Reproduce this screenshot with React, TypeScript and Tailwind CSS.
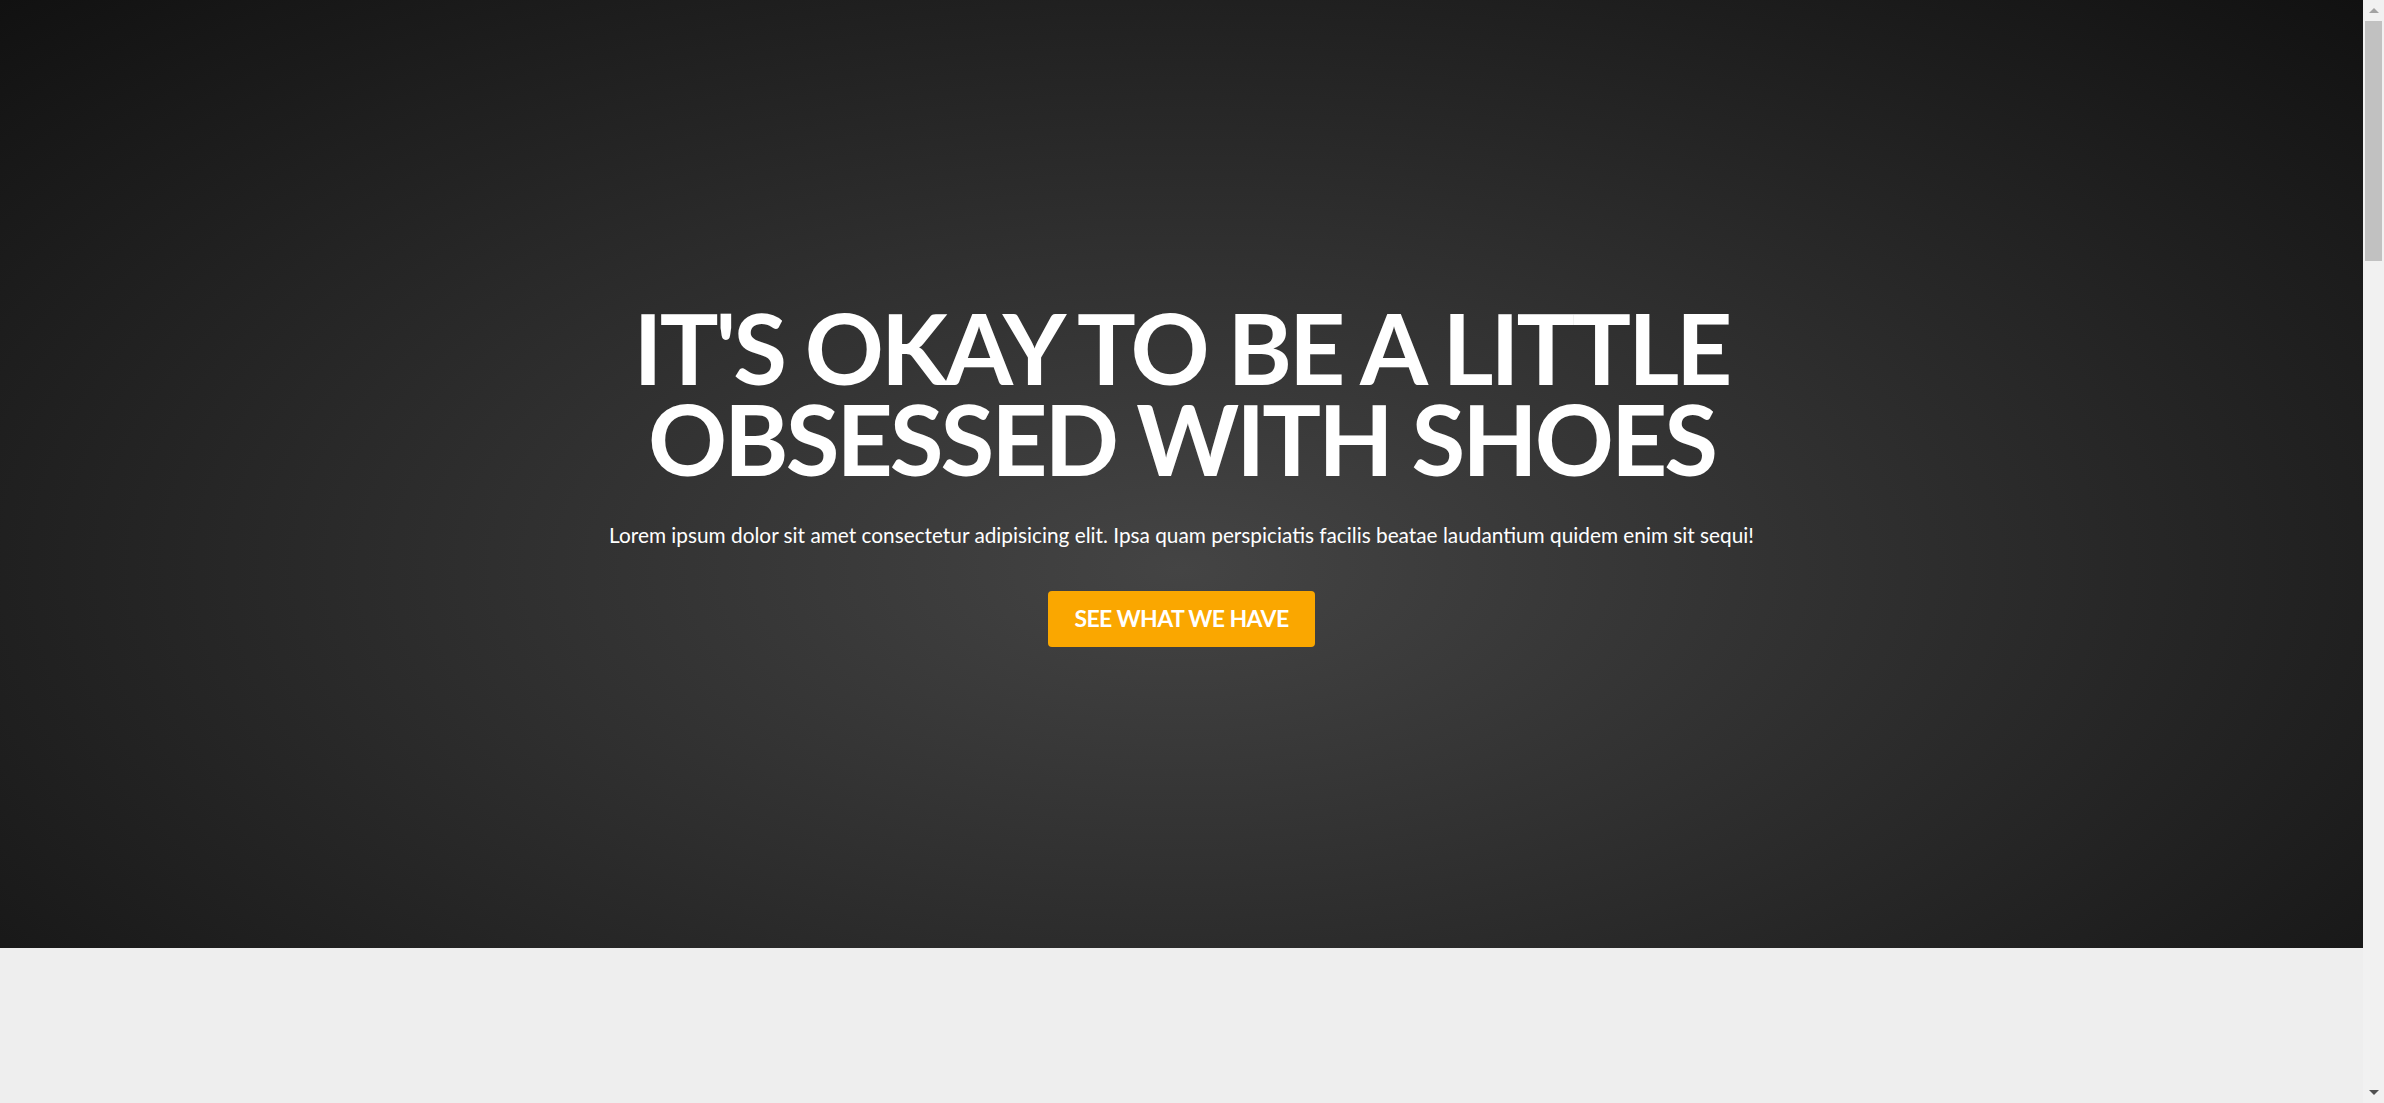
const products = [
  { name: "Air Runner", price: "$129" },
  { name: "Street Classic", price: "$89" },
  { name: "Trail Blazer", price: "$149" },
  { name: "City Loafer", price: "$119" },
  { name: "Court Low", price: "$99" },
  { name: "Summer Slide", price: "$49" },
  { name: "Canvas High", price: "$79" },
  { name: "Suede Boot", price: "$169" },
];

// window scrollbar, drawn so the frame matches the browser shot
const Scrollbar = () => (
  <div className="fixed top-0 right-0 h-screen w-[21px] bg-[#f1f1f1] flex flex-col items-center">
    <div className="h-[21px] w-full flex items-center justify-center">
      <div className="w-0 h-0 border-l-[5px] border-r-[5px] border-b-[5px] border-l-transparent border-r-transparent border-b-[#a3a3a3]" />
    </div>
    <div className="w-[17px] h-[240px] bg-[#c1c1c1]" />
    <div className="flex-1" />
    <div className="h-[21px] w-full flex items-center justify-center">
      <div className="w-0 h-0 border-l-[5px] border-r-[5px] border-t-[5px] border-l-transparent border-r-transparent border-t-[#505050]" />
    </div>
  </div>
);

const App = () => {
  return (
    <div className="mr-[21px] font-['Lato','Noto_Sans',sans-serif]">
      <section className="h-[948px] flex flex-col items-center justify-center text-center bg-[radial-gradient(ellipse_at_50%_60%,#444444_0%,#111111_100%)]">
        <h1 className="text-white font-bold uppercase text-[98px] leading-[91px] tracking-[-3px] max-w-[1200px]">
          It's okay to be a little obsessed with shoes
        </h1>
        <p className="mt-[37px] text-white text-[20.8px] leading-[28px]">
          Lorem ipsum dolor sit amet consectetur adipisicing elit. Ipsa quam perspiciatis facilis beatae laudantium quidem enim sit sequi!
        </p>
        <button className="mt-[42px] h-[56px] px-[26px] rounded-[4px] bg-[#faa700] text-white font-bold uppercase text-[23px] tracking-[-0.6px]">
          See what we have
        </button>
      </section>

      <section className="bg-[#eeeeee] pt-[150px] pb-32">
        <h2 className="text-center text-[64px] leading-none font-bold text-[#1e3a42]">Our Products</h2>
        <div className="mt-16 mx-auto max-w-[1400px] grid grid-cols-4 gap-8">
          {products.map((p) => (
            <div key={p.name} className="bg-white rounded-lg p-6 h-[420px] flex flex-col justify-end">
              <p className="text-xl font-bold text-[#1e3a42]">{p.name}</p>
              <p className="text-lg text-[#faa700]">{p.price}</p>
            </div>
          ))}
        </div>
      </section>

      <section className="bg-[#1e3a42] py-40 text-center text-white">
        <h2 className="text-[56px] font-bold">About us</h2>
        <p className="mt-6 mx-auto max-w-[900px] text-xl">
          Lorem ipsum dolor sit amet consectetur adipisicing elit. Quasi, eaque.
        </p>
      </section>

      <footer className="bg-[#111111] py-20 text-center text-gray-400">© Shoes Store</footer>

      <Scrollbar />
    </div>
  );
};

export default App;
